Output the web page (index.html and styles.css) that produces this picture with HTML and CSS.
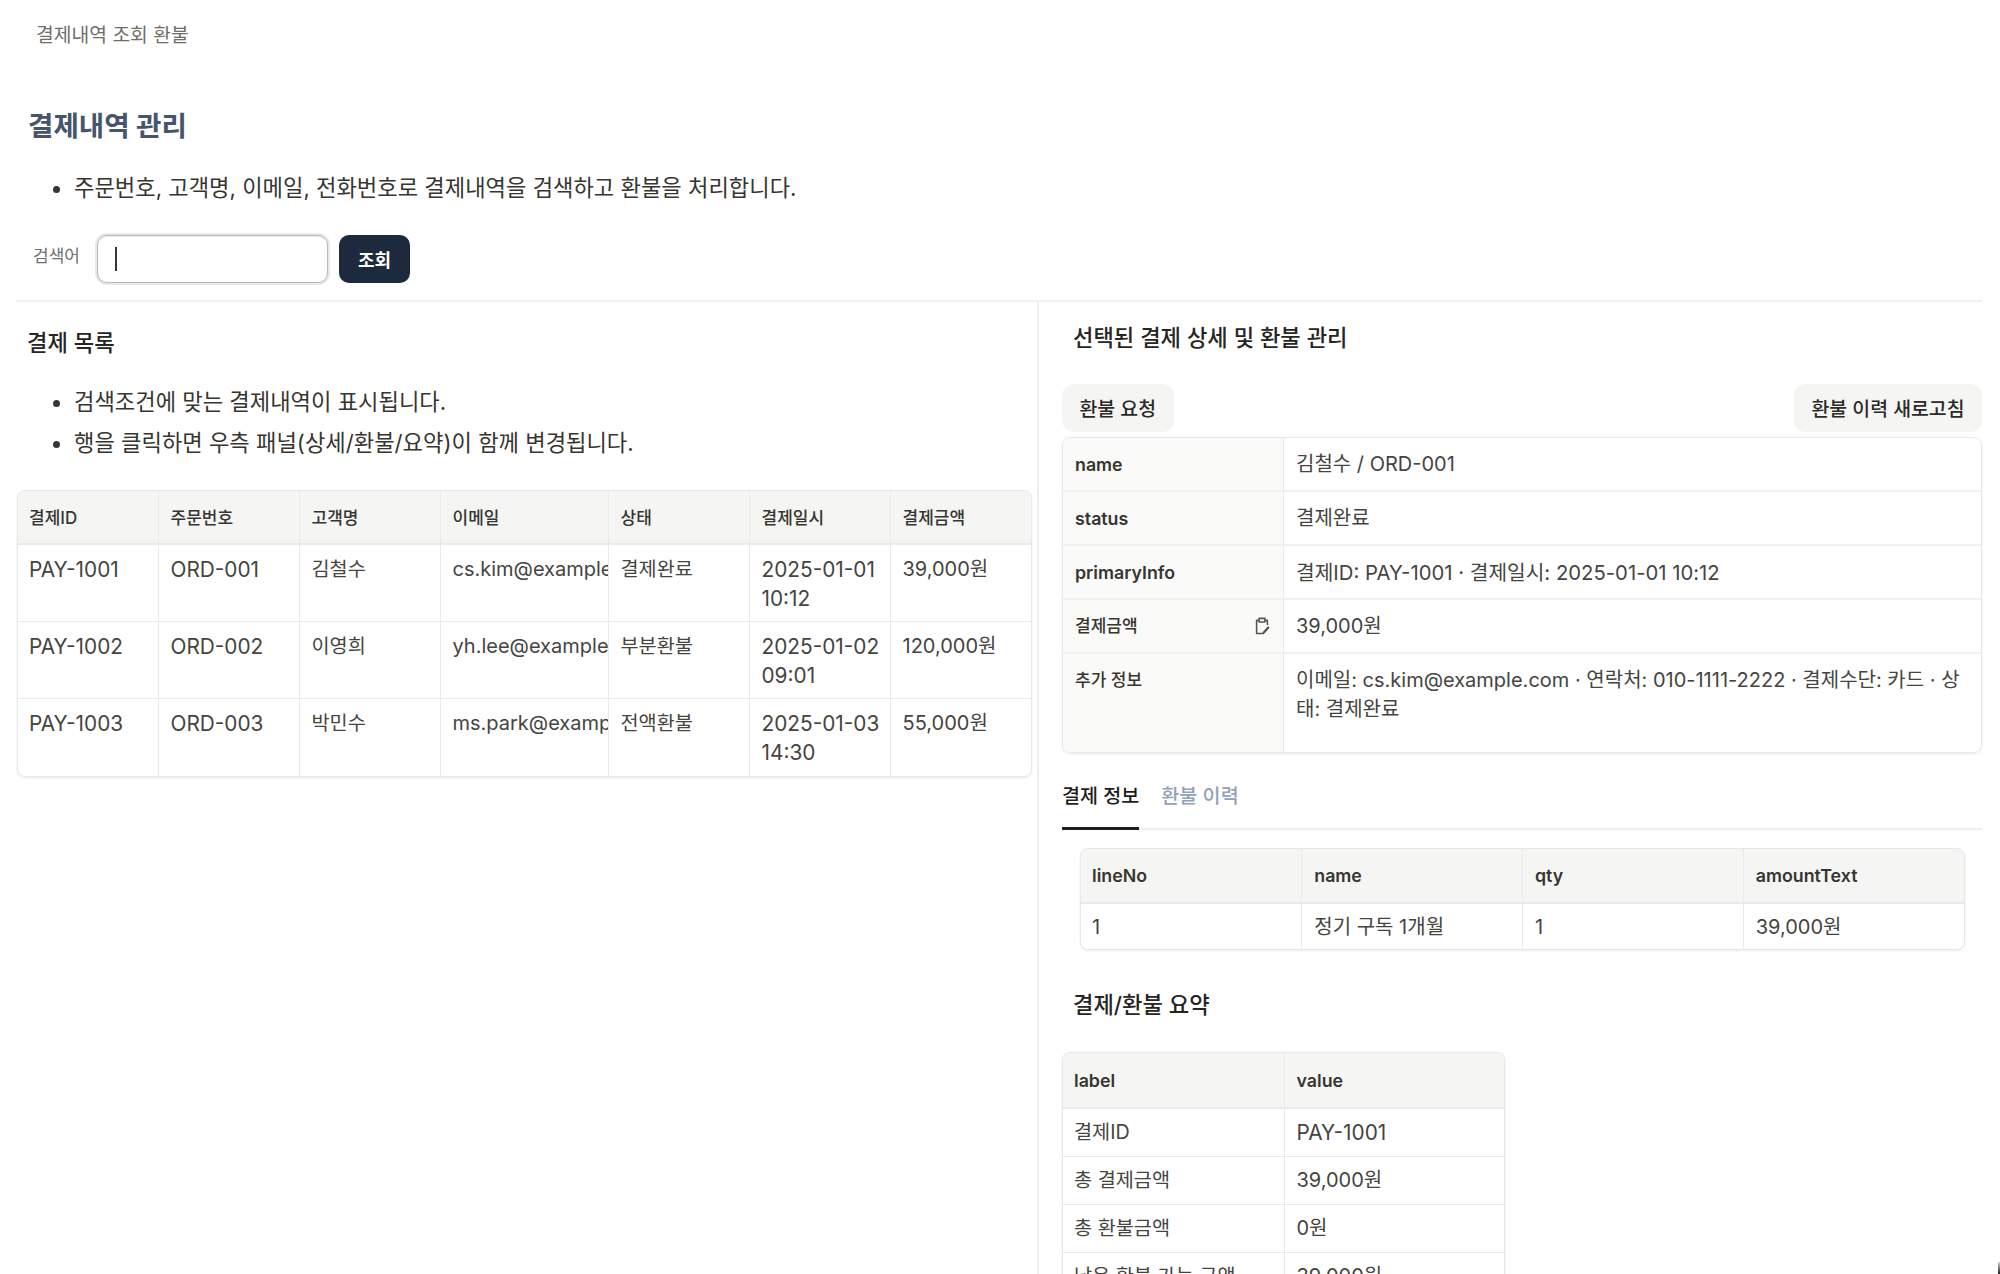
FILE: index.html
```html
<!DOCTYPE html>
<html lang="ko">
<head>
<meta charset="utf-8">
<title>결제내역 조회 환불</title>
<link rel="stylesheet" href="styles.css">
</head>
<body>
<div class="page">
  <div class="crumb">결제내역 조회 환불</div>
  <section class="top">
    <h1 class="page-title">결제내역 관리</h1>
    <ul class="notes"><li>주문번호, 고객명, 이메일, 전화번호로 결제내역을 검색하고 환불을 처리합니다.</li></ul>
    <div class="search">
      <label class="search-label">검색어</label>
      <div class="search-input"><span class="caret"></span></div>
      <button class="primary">조회</button>
    </div>
  </section>
  <div class="split">
    <section class="left">
      <h2 class="sub-title">결제 목록</h2>
      <ul class="notes list-notes">
        <li>검색조건에 맞는 결제내역이 표시됩니다.</li>
        <li>행을 클릭하면 우측 패널(상세/환불/요약)이 함께 변경됩니다.</li>
      </ul>
      <div class="tbl-wrap">
        <table class="tbl pay">
          <colgroup><col class="c140"><col class="c141"><col class="c141"><col class="c168"><col class="c141"><col class="c141"><col class="c142"></colgroup>
          <thead><tr><th>결제ID</th><th>주문번호</th><th>고객명</th><th>이메일</th><th>상태</th><th>결제일시</th><th>결제금액</th></tr></thead>
          <tbody>
            <tr><td class="lat">PAY-1001</td><td class="lat">ORD-001</td><td class="ko">김철수</td><td class="clip">cs.kim@example.com</td><td class="ko">결제완료</td><td class="lat date">2025-01-01 10:12</td><td>39,000원</td></tr>
            <tr><td class="lat">PAY-1002</td><td class="lat">ORD-002</td><td class="ko">이영희</td><td class="clip">yh.lee@example.com</td><td class="ko">부분환불</td><td class="lat date">2025-01-02 09:01</td><td>120,000원</td></tr>
            <tr><td class="lat">PAY-1003</td><td class="lat">ORD-003</td><td class="ko">박민수</td><td class="clip">ms.park@example.com</td><td class="ko">전액환불</td><td class="lat date">2025-01-03 14:30</td><td>55,000원</td></tr>
          </tbody>
        </table>
      </div>
    </section>
    <section class="right">
      <h2 class="sub-title right-title">선택된 결제 상세 및 환불 관리</h2>
      <div class="actions"><button class="ghost">환불 요청</button><button class="ghost">환불 이력 새로고침</button></div>
      <div class="desc">
        <div class="desc-row"><div class="desc-k strong">name</div><div class="desc-v">김철수 / ORD-001</div></div>
        <div class="desc-row"><div class="desc-k strong">status</div><div class="desc-v">결제완료</div></div>
        <div class="desc-row"><div class="desc-k strong">primaryInfo</div><div class="desc-v mix">결제ID: PAY-1001 · 결제일시: 2025-01-01 10:12</div></div>
        <div class="desc-row"><div class="desc-k">결제금액
          <svg class="icon" viewBox="0 0 16 16" fill="none" stroke="currentColor" stroke-width="1.4" stroke-linecap="round" stroke-linejoin="round"><path d="M5 3H3.2v11.6H7.5"/><path d="M11 3h1.8v3.6"/><path d="M5.4 1.2h5.2v3.2H5.4z"/><path d="M9 14.4l4.6-5" stroke-width="2"/></svg>
        </div><div class="desc-v">39,000원</div></div>
        <div class="desc-row tall"><div class="desc-k">추가 정보</div><div class="desc-v">이메일: cs.kim@example.com · 연락처: 010-1111-2222 · 결제수단: 카드 · 상태: 결제완료</div></div>
      </div>
      <div class="tabs"><div class="tab active">결제 정보</div><div class="tab">환불 이력</div></div>
      <div class="tab-body">
        <div class="tbl-wrap">
          <table class="tbl lines">
            <thead><tr><th>lineNo</th><th>name</th><th>qty</th><th>amountText</th></tr></thead>
            <tbody><tr><td>1</td><td>정기 구독 1개월</td><td>1</td><td>39,000원</td></tr></tbody>
          </table>
        </div>
      </div>
      <h2 class="sub-title summary-title">결제/환불 요약</h2>
      <div class="tbl-wrap summary">
        <table class="tbl sum">
          <thead><tr><th>label</th><th>value</th></tr></thead>
          <tbody>
            <tr><td class="ko">결제ID</td><td class="lat">PAY-1001</td></tr>
            <tr><td class="ko">총 결제금액</td><td>39,000원</td></tr>
            <tr><td class="ko">총 환불금액</td><td>0원</td></tr>
            <tr><td class="ko">남은 환불 가능 금액</td><td>39,000원</td></tr>
          </tbody>
        </table>
      </div>
    </section>
  </div>
</div>
<div class="corner"></div>
</body>
</html>
```
FILE: styles.css
```css
* { box-sizing: border-box; }
html, body { margin: 0; height: 100%; }
body { position: relative; width: 2000px; height: 1274px; overflow: hidden; background: #fff; color: #37352f; font-family: Inter, "Noto Sans CJK KR", sans-serif; font-size: 20px; }
.corner { position: absolute; right: 0; bottom: 0; width: 2px; height: 12px; background: linear-gradient(to bottom, rgba(30,30,30,.2), #222); }
.page { padding: 0 18px 0 16px; }
.crumb { height: 68px; padding: 21px 20px 0; font-size: 19.3px; line-height: 28px; color: #6f6e69; }
.top { height: 234px; border-bottom: 2px solid #f0f0ef; }
.page-title { margin: 0; padding: 38px 12px 0; font-size: 27.6px; line-height: 40px; font-weight: 700; color: #45556c; }
.notes { margin: 21px 0 0; padding: 0 12px 0 58px; line-height: 41px; font-size: 22.2px; color: #37352f; }
.search { display: flex; align-items: center; margin-top: 27px; padding-left: 17px; }
.search-label { width: 64px; font-size: 17px; color: #6f6e69; margin-top: -10px; }
.search-input { width: 231px; height: 48px; background: #fff; border: 1px solid #b9b9bd; border-radius: 10px; box-shadow: 0 0 0 2px #e8e8e8, inset 0 1px 1px rgba(0,0,0,.08); display: flex; align-items: center; padding-left: 17px; }
.caret { width: 2px; height: 24px; background: #37352f; }
.primary { margin-left: 11px; width: 71px; height: 48px; border: 0; border-radius: 10px; background: #1d293d; color: #fff; font: 700 18px Inter, "Noto Sans CJK KR", sans-serif; }
.split { display: flex; }
.left { width: 1021px; flex: none; padding-right: 6px; }
.right { flex: 1; border-left: 2px solid #f0f0ef; padding-left: 23px; }
.sub-title { margin: 0; font-size: 22.2px; line-height: 32px; font-weight: 500; color: #262522; padding: 25px 11px 0; }
.right-title { padding-top: 20px; }
.list-notes { margin-top: 22px; }
.tbl-wrap { border: 1px solid #e7e8ea; border-radius: 8px; overflow: hidden; box-shadow: 0 1px 3px rgba(0,0,0,.08); background: #fff; }
.left .tbl-wrap { margin: 27px 0 0 1px; width: 1015px; }
.tbl { width: 100%; border-collapse: collapse; table-layout: fixed; font-size: 20px; line-height: 29px; }
.tbl th { background: #f5f5f4; font-size: 17px; font-weight: 500; text-align: left; padding: 2px 11px 0 12px; height: 53px; border-right: 1px solid #e9eaec; border-bottom: 2px solid #e9eaec; color: #37352f; }
.tbl td { padding: 10px 11px 8px 12px; vertical-align: top; border-right: 1px solid #e9eaec; border-bottom: 1px solid #e9eaec; color: #45443f; }
.tbl th:first-child, .tbl td:first-child { padding-left: 11px; }
.tbl td.lat { font-size: 20.8px; }
.tbl td.date { padding-right: 4px; }
.tbl td.ko { font-size: 19.7px; }
.tbl th:last-child, .tbl td:last-child { border-right: 0; }
.tbl tbody tr:last-child td { border-bottom: 0; }
.c140 { width: 140px; } .c141 { width: 141px; } .c142 { width: 142px; } .c168 { width: 168px; }
.pay td { height: 77px; }
.pay td.clip { white-space: nowrap; overflow: hidden; padding-right: 0; }
.actions { display: flex; justify-content: space-between; margin-top: 30px; }
.ghost { height: 48px; padding: 0 17.5px 2px; border: 0; border-radius: 12px; background: #f5f5f4; color: #2b2a26; font: 500 19.4px Inter, "Noto Sans CJK KR", sans-serif; }
.desc { margin-top: 5px; border: 1px solid #e7e8ea; border-radius: 8px; overflow: hidden; box-shadow: 0 1px 3px rgba(0,0,0,.08); }
.desc-row { display: flex; height: 54px; border-bottom: 2px solid #f0f0ef; }
.desc-row.tall { height: 98px; border-bottom: 0; }
.desc-k { width: 221px; flex: none; background: #fafaf9; border-right: 1px solid #e9eaec; padding: 12px 12px 0; font-size: 17px; font-weight: 500; line-height: 29px; color: #37352f; display: flex; justify-content: space-between; align-items: flex-start; }
.desc-k.strong { font-size: 17.8px; font-weight: 600; }
.desc-v { flex: 1; padding: 12px 12px 0; line-height: 29px; color: #45443f; }
.desc-v.mix { font-size: 20.3px; }
.icon { width: 18px; height: 18px; margin: 5px 0 0 0; color: #55544f; }
.tabs { display: flex; gap: 22px; margin-top: 24px; border-bottom: 2px solid #efefee; height: 53px; }
.tab { font-size: 19.6px; font-weight: 500; line-height: 38px; color: #90a1b9; height: 53px; }
.tab.active { color: #1f1e1b; border-bottom: 3px solid #1f1e1b; }
.tab-body { padding: 18px 17px 0 18px; }
.lines th, .sum th { font-size: 17.8px; font-weight: 600; padding-top: 0; }
.lines th { height: 54px; }
.lines td { height: 46px; padding-top: 9px; padding-bottom: 7px; }
.summary-title { padding-top: 39px; }
.summary { width: 443px; margin-top: 31px; }
.sum th { height: 55px; }
.sum th:first-child { width: 221px; }
.sum td { height: 47.5px; padding-top: 9px; padding-bottom: 9px; }
```
